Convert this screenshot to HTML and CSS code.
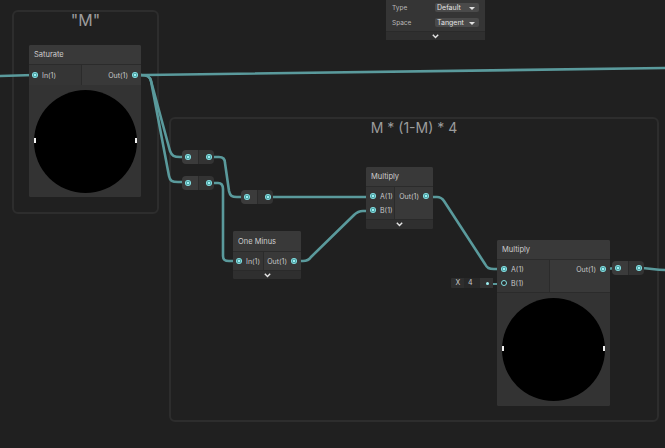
FILE: index.html
```html
<!DOCTYPE html>
<html>
<head>
<meta charset="utf-8">
<link rel="stylesheet" href="styles.css">
</head>
<body>
<div class="graph">
  <div class="group group-m"><div class="group-title">"M"</div></div>
  <div class="group group-big"><div class="group-title">M * (1-M) * 4</div></div>

  <svg class="wires" width="665" height="448" viewBox="0 0 665 448">
    <g fill="none" stroke="#5a9a9c" stroke-width="2.6" stroke-linecap="round" stroke-linejoin="round">
      <path d="M0 76 L34 75"/>
      <path d="M136 75 L146 75 L665 68"/>
      <path d="M140 75 C148 75 150 77 151 81 L170 151 C172 156 174 157 180 157 L188 157"/>
      <path d="M140 75 C148 75 150 77 151 81 L169 176 C170 181 172 182 178 182 L188 182"/>
      <path d="M209 157 L219 157 C223 157 225 159 225 163 L229 191 C230 196 232 197 237 197 L247 197"/>
      <path d="M209 183 L218 183 C221 183 223 185 223 189 L223 256 C223 260 225 261 229 261 L239 261"/>
      <path d="M268 197 L373 197"/>
      <path d="M294 261 L303 261 C307 261 309 260 311 257 L354 215 C357 212 359 211 363 211 L373 211"/>
      <path d="M426 197 L437 197 C440 197 442 198 444 201 L485 264 C487 268 489 269 494 269 L504 269"/>
      <path d="M603 269 L618 268"/>
      <path d="M639 268 C650 268 654 270 665 270"/>
      <path d="M489 284 L503 284" stroke-width="2"/>
    </g>
  </svg>

  <div class="props">
    <div class="props-rows">
      <div class="prop-row"><span class="prop-label">Type</span><span class="dropdown">Default</span></div>
      <div class="prop-row"><span class="prop-label">Space</span><span class="dropdown">Tangent</span></div>
    </div>
    <div class="collapse bar-props"><svg width="7" height="5" viewBox="0 0 7 5"><polyline points="0.8,0.8 3.5,3.6 6.2,0.8" fill="none" stroke="#e6e6e6" stroke-width="1.4"/></svg></div>
  </div>

  <div class="node node-saturate">
    <div class="node-title">Saturate</div>
    <div class="ports ports-single">
      <div class="inputs in-sat">
        <div class="port port-in"><span class="dot"></span><span>In(1)</span></div>
      </div>
      <div class="outputs">
        <div class="port port-out"><span>Out(1)</span><span class="dot"></span></div>
      </div>
    </div>
    <div class="preview prev-sat"><div class="ball"></div></div>
  </div>

  <div class="node node-mul1">
    <div class="node-title">Multiply</div>
    <div class="ports ports-double">
      <div class="inputs in-mul1">
        <div class="port port-in"><span class="dot"></span><span>A(1)</span></div>
        <div class="port port-in"><span class="dot"></span><span>B(1)</span></div>
      </div>
      <div class="outputs">
        <div class="port port-out"><span>Out(1)</span><span class="dot"></span></div>
      </div>
    </div>
    <div class="collapse"><svg width="7" height="5" viewBox="0 0 7 5"><polyline points="0.8,0.8 3.5,3.6 6.2,0.8" fill="none" stroke="#e6e6e6" stroke-width="1.4"/></svg></div>
  </div>

  <div class="node node-minus">
    <div class="node-title tall">One Minus</div>
    <div class="ports ports-minus">
      <div class="inputs in-minus">
        <div class="port port-in"><span class="dot"></span><span>In(1)</span></div>
      </div>
      <div class="outputs">
        <div class="port port-out"><span>Out(1)</span><span class="dot"></span></div>
      </div>
    </div>
    <div class="collapse short"><svg width="7" height="5" viewBox="0 0 7 5"><polyline points="0.8,0.8 3.5,3.6 6.2,0.8" fill="none" stroke="#e6e6e6" stroke-width="1.4"/></svg></div>
  </div>

  <div class="node node-mul2">
    <div class="node-title">Multiply</div>
    <div class="ports ports-double2">
      <div class="inputs in-mul2">
        <div class="port port-in"><span class="dot"></span><span>A(1)</span></div>
        <div class="port port-in"><span class="dot hollow"></span><span>B(1)</span></div>
      </div>
      <div class="outputs">
        <div class="port port-out"><span>Out(1)</span><span class="dot"></span></div>
      </div>
    </div>
    <div class="preview prev-mul2"><div class="ball"></div></div>
  </div>

  <div class="inline-value">
    <span class="iv-label">X</span>
    <span class="iv-field">4</span>
    <span class="iv-port"><span class="mini-dot"></span></span>
  </div>

  <div class="reroute r1"><span class="half in"><span class="dot"></span></span><span class="half out"><span class="dot"></span></span></div>
  <div class="reroute r2"><span class="half in"><span class="dot"></span></span><span class="half out"><span class="dot"></span></span></div>
  <div class="reroute r3"><span class="half in"><span class="dot"></span></span><span class="half out"><span class="dot"></span></span></div>
  <div class="reroute r4"><span class="half in"><span class="dot"></span></span><span class="half out"><span class="dot"></span></span></div>
</div>
</body>
</html>
```

FILE: styles.css
```css
* { box-sizing: border-box; }
body {
  margin: 0;
  background: #202020;
  font-family: "Inter", "Noto Sans", "Liberation Sans", sans-serif;
}
.graph {
  position: relative;
  width: 665px;
  height: 448px;
  overflow: hidden;
  background: #202020;
}

/* groups */
.group {
  position: absolute;
  border: 2px solid #2d2d2d;
  border-radius: 6px;
  display: flex;
  justify-content: center;
  align-items: flex-start;
}
.group-title {
  color: #9c9c9c;
  white-space: nowrap;
}
.group-m { left: 12px; top: 10px; width: 147px; height: 204px; }
.group-m .group-title { font-size: 16px; line-height: 16px; margin-top: 0; }
.group-big { left: 169px; top: 117px; width: 490px; height: 305px; }
.group-big .group-title { font-size: 14px; line-height: 18px; }

.wires { position: absolute; left: 0; top: 0; z-index: 1; }

/* nodes */
.node {
  position: absolute;
  z-index: 2;
  background: #393939;
  display: flex;
  flex-direction: column;
  border-radius: 2px;
  overflow: hidden;
}
.node-title {
  height: 20px;
  display: flex;
  align-items: center;
  padding-left: 5px;
  font-size: 7.5px;
  color: #cdcdcd;
  background: #393939;
  border-bottom: 1px solid #2b2b2b;
}
.node-title.tall { height: 21px; }
.ports { display: flex; }
.inputs {
  background: #353535;
  border-right: 1px solid #2b2b2b;
  display: flex;
  flex-direction: column;
}
.outputs {
  flex: 1;
  display: flex;
  flex-direction: column;
  align-items: flex-end;
  background: #393939;
}
.port {
  display: flex;
  align-items: center;
  gap: 4px;
  height: 14px;
  font-size: 7px;
  color: #c9c9c9;
  white-space: nowrap;
}
.dot {
  width: 6px;
  height: 6px;
  flex: none;
  border-radius: 50%;
  background: radial-gradient(circle, #9ff1f3 0 1.3px, #4a9ea1 1.6px 2px, #84e2e5 2.3px);
}
.dot.hollow {
  background: #2a2a2a;
  border: 1px solid #84e2e5;
}

.node-saturate { left: 29px; top: 45px; width: 112px; }
.ports-single { height: 20px; }
.in-sat { width: 53px; justify-content: center; padding-left: 3px; }
.ports-single .outputs { justify-content: center; padding-right: 3px; }
.prev-sat { height: 112px; }

.node-mul1 { left: 366px; top: 167px; width: 67px; }
.ports-double { height: 32px; }
.in-mul1 { width: 29px; padding: 2px 0 0 4px; }
.ports-double .outputs { padding: 2px 4px 0 0; }

.node-minus { left: 233px; top: 231px; width: 68px; }
.ports-minus { height: 18px; }
.in-minus { width: 31px; justify-content: center; padding-left: 3px; }
.ports-minus .outputs { justify-content: center; padding-right: 4px; }

.node-mul2 { left: 497px; top: 240px; width: 113px; }
.ports-double2 { height: 33px; border-bottom: 1px solid #2b2b2b; }
.in-mul2 { width: 53px; padding: 2px 0 0 4px; }
.ports-double2 .outputs { padding: 2px 4px 0 0; }
.prev-mul2 { height: 113px; }

.preview {
  background: #333333;
  display: flex;
  align-items: center;
  justify-content: center;
}
.ball {
  position: relative;
  width: 103px;
  height: 103px;
  border-radius: 50%;
  background: #000;
}
.ball::before, .ball::after {
  content: "";
  position: absolute;
  top: 48px;
  width: 2px;
  height: 5px;
  background: #f2f2f2;
}
.ball::before { left: 0; }
.ball::after { right: 0; }

.collapse {
  height: 10px;
  background: #2f2f2f;
  border-top: 1px solid #2a2a2a;
  display: flex;
  align-items: center;
  justify-content: center;
}
.collapse.short { height: 9px; }

/* property panel */
.props {
  position: absolute;
  z-index: 2;
  left: 386px;
  top: 0;
  width: 99px;
  height: 40px;
  background: #353535;
  display: flex;
  flex-direction: column;
}
.props-rows { padding: 0 6px 1px 6px; }
.prop-row {
  height: 15px;
  display: flex;
  align-items: center;
  justify-content: space-between;
}
.prop-label { font-size: 6.5px; color: #b9b9b9; }
.dropdown {
  position: relative;
  width: 44px;
  height: 9px;
  background: #4a4a4a;
  border-radius: 2px;
  font-size: 7px;
  line-height: 9px;
  color: #e2e2e2;
  padding-left: 2px;
}
.dropdown::after {
  content: "";
  position: absolute;
  right: 4px;
  top: 3.5px;
  border-left: 3px solid transparent;
  border-right: 3px solid transparent;
  border-top: 3px solid #e2e2e2;
}
.bar-props { flex: 1; height: auto; }

/* inline value */
.inline-value {
  position: absolute;
  z-index: 2;
  left: 451px;
  top: 278px;
  width: 42px;
  height: 10px;
  display: flex;
  background: #2e2e2e;
  border-radius: 1px;
  font-size: 7px;
  color: #c9c9c9;
  line-height: 10px;
}
.iv-label { width: 13px; text-align: center; padding-left: 1px; }
.iv-field { width: 16px; background: #282828; padding-left: 4px; }
.iv-port { flex: 1; display: flex; align-items: center; justify-content: flex-end; padding-right: 4px; background: #333; }
.mini-dot { width: 3px; height: 3px; border-radius: 50%; background: #9ff1f3; }

/* reroutes */
.reroute {
  position: absolute;
  z-index: 2;
  display: flex;
  width: 32px;
  height: 14px;
  border-radius: 4px;
  overflow: hidden;
}
.reroute .half { display: flex; align-items: center; height: 100%; }
.reroute .in { width: 17px; background: #3b3b3b; padding-left: 3px; border-right: 1px solid #2a2a2a; }
.reroute .out { flex: 1; background: #333333; justify-content: flex-end; padding-right: 2px; }
.r1 { left: 182px; top: 150px; }
.r2 { left: 182px; top: 176px; }
.r3 { left: 241px; top: 190px; }
.r4 { left: 612px; top: 261px; }
```
